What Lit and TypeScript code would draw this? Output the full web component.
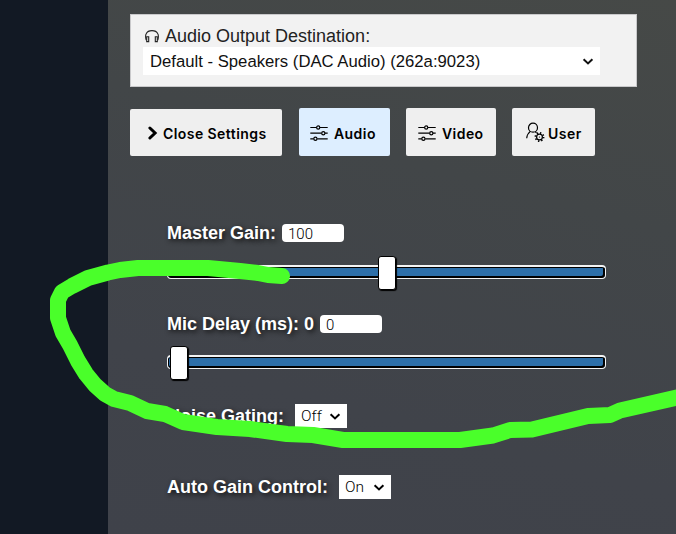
import { LitElement, html, css, svg } from "lit";
import { customElement } from "lit/decorators.js";
import { classMap } from "lit/directives/class-map.js";
import { styleMap } from "lit/directives/style-map.js";

const chevron = html`<svg class="caret" width="12" height="8" viewBox="0 0 12 8">
  <path d="M1.600 1.200 6 5.400l4.400-4.200" fill="none" stroke="currentColor" stroke-width="2" />
</svg>`;

const sliders = svg`<svg width="18" height="16" viewBox="0 0 18 16" fill="none" stroke="currentColor" stroke-width="1.2">
  <path d="M.3 2.500h6.200M10 2.500h7.700M.3 8.200h11.200M15 8.200h2.700M.3 13.800h3.400M7.200 13.800h10.500" />
  <circle cx="8.2" cy="2.5" r="1.6" /><circle cx="13.3" cy="8.2" r="1.6" /><circle cx="5.4" cy="13.8" r="1.6" />
</svg>`;

const arrow = svg`<svg width="11" height="14" viewBox="0 0 11 14">
  <path d="M2.900 2 8.100 7 2.900 12" fill="none" stroke="currentColor" stroke-width="3" stroke-linecap="round" />
</svg>`;

const userGear = svg`<svg width="19" height="21" viewBox="0 0 19 21" fill="none" stroke="currentColor" stroke-width="1.2">
  <circle cx="7" cy="5.700" r="4.500" />
  <path d="M4.300 9.400C2.300 11 1 13.200.7 16.200M9.100 9.700l1.500 1" />
  <circle cx="13.500" cy="15" r="2.900" />
  <circle cx="13.500" cy="15" r="4.100" stroke-width="1.700" stroke-dasharray="1.350 1.870" />
  <circle cx="13.500" cy="15" r=".6" fill="currentColor" stroke="none" />
</svg>`;

const headphones = svg`<svg width="14" height="14" viewBox="0 0 14 14" fill="none" stroke="currentColor" stroke-width="1.1">
  <path d="M1.200 10.200C.4 7.300.4 5.200 1.200 3.700 2.200 1.500 4.300.6 7 .6s4.800.9 5.800 3.100c.8 1.500.8 3.600 0 6.500" />
  <path d="M1.700 6.700h2v4.900h-2zM10.300 6.700h2v4.900h-2z" />
</svg>`;

@customElement("tab-button")
class TabButton extends LitElement {
  static properties = { label: {}, icon: { attribute: false }, kind: {} };
  declare label: string;
  declare icon: unknown;
  declare kind: string;

  static styles = css`
    :host { display: block; }
    .tab {
      display: flex; align-items: center; gap: 6px; box-sizing: border-box;
      width: 90px; height: 48px; padding: 3px 0 0 12px; border: 0; border-radius: 2px;
      background: #efefef; color: #000;
      font: 600 14px/20px Inter, "Liberation Sans", sans-serif; letter-spacing: 0.43px; white-space: nowrap;
    }
    .tab svg { flex: none; margin-top: -2px; }
    .active { width: 91px; padding-left: 11px; background: #ddeeff; }
    .primary { width: 152px; height: 47px; padding-left: 17px; gap: 5px; }
    .user { width: 83px; padding-left: 14px; gap: 3px; letter-spacing: 0.5px; }
  `;
  render() {
    return html`<button class=${classMap({
      tab: true,
      active: this.kind === "active",
      primary: this.kind === "primary",
      user: this.kind === "user",
    })}>${this.icon}<span>${this.label}</span></button>`;
  }
}

@customElement("range-slider")
class RangeSlider extends LitElement {
  static properties = { offset: { type: Number } };
  declare offset: number;
  static styles = css`
    :host { display: block; }
    .track {
      position: relative; box-sizing: border-box; width: 439px; height: 14px;
      border: solid #f4f4f4; border-width: 2px 1px 1px; border-radius: 4px; background: #2d6fa9;
      box-shadow: inset 0 0 0 1px #000, inset -1px -1px 0 1px #000;
    }
    .thumb {
      position: absolute; top: -11px; box-sizing: border-box; width: 18px; height: 34px;
      border: 1px solid #000; border-radius: 3px; background: #fff; box-shadow: 1px 1px 1px #000;
    }
  `;
  render() {
    return html`<div class="track"><div class="thumb" style=${styleMap({ left: `${this.offset}px` })}></div></div>`;
  }
}

@customElement("app-root")
class AppRoot extends LitElement {
  static styles = css`
    :host {
      display: flex; position: relative; width: 676px; height: 534px; overflow: hidden;
      background: #121924; font-family: "Liberation Sans", Arial, sans-serif;
    }
    .sidebar { flex: none; width: 108px; }
    .content {
      flex: 1; box-sizing: border-box; padding: 14px 39px 0 22px;
      background: linear-gradient(195deg, #464947 0%, #424648 34%, #40434a 72%, #3f424a 100%);
    }
    .output {
      box-sizing: border-box; width: 507px; height: 73px; padding: 11px 12px 0;
      border: 1px solid #c9c9cb; background: #f2f2f2; color: #222;
    }
    .heading { display: flex; align-items: center; gap: 6px; height: 21px; padding-left: 2px; font-size: 18px; white-space: nowrap; }
    .select { display: flex; align-items: center; justify-content: space-between; box-sizing: border-box; background: #fff; color: #111; white-space: nowrap; }
    .device { width: 457px; height: 28px; padding: 1px 6px 0 7px; font-size: 16.7px; }
    .tabs { display: flex; align-items: flex-end; margin-top: 21px; gap: 16px; }
    .first { margin-right: 1px; }
    .controls { padding: 67px 0 0 37px; }
    .row { display: flex; align-items: center; height: 20px; color: #fff; }
    .name { font-weight: 700; font-size: 18px; line-height: 20px; white-space: nowrap; text-shadow: 2px 2px 5px #111; }
    .number {
      box-sizing: border-box; width: 62px; height: 18px; padding: 0 6px; margin-left: 6px;
      border-radius: 4px; background: #fff; color: #000; font: 300 15px/20px Roboto, sans-serif;
    }
    .slider { padding: 22px 0 35px; }
    .delay { padding: 21px 0 37px; }
    .choice { width: 52px; height: 24px; padding: 1px 6px 0 6px; margin-left: 11px; font: 300 15.500px/23px Roboto, sans-serif; color: #000; }
    .last { margin-top: 51px; }
    .marker { position: absolute; inset: 0; }
  `;

  private marker = "M282 276L268 275 258 273 240 271 208 268H138L120 270 108 272.500 88 278 72 286 62 292 58 300V318L63 333 70 345 78 361 86 374 95 385 105 394 114 399 130 403 147 411 165 414 183 422 217 427 250 429 287 434 313 435 343 440H460L493 435.500 510 430 532 429.500 588 416 610 415 620 410.500 688 395";

  render() {
    return html`
      <div class="sidebar"></div>
      <main class="content">
        <section class="output">
          <div class="heading">${headphones}<span>Audio Output Destination:</span></div>
          <div class="select device"><span>Default - Speakers (DAC Audio) (262a:9023)</span>${chevron}</div>
        </section>
        <nav class="tabs">
          <tab-button class="first" label="Close Settings" .icon=${arrow} kind="primary"></tab-button>
          <tab-button label="Audio" .icon=${sliders} kind="active"></tab-button>
          <tab-button label="Video" .icon=${sliders}></tab-button>
          <tab-button label="User" .icon=${userGear} kind="user"></tab-button>
        </nav>
        <section class="controls">
          <div class="row"><span class="name">Master Gain:</span><span class="number">100</span></div>
          <div class="slider"><range-slider .offset=${210}></range-slider></div>
          <div class="row"><span class="name">Mic Delay (ms): 0</span><span class="number">0</span></div>
          <div class="slider delay"><range-slider .offset=${2}></range-slider></div>
          <div class="row"><span class="name">Noise Gating:</span><span class="select choice"><span>Off</span>${chevron}</span></div>
          <div class="row last"><span class="name">Auto Gain Control:</span><span class="select choice"><span>On</span>${chevron}</span></div>
        </section>
      </main>
      <svg class="marker" width="676" height="534" viewBox="0 0 676 534">
        <path d=${this.marker} fill="none" stroke="#4aff2a" stroke-width="16" stroke-linecap="round" stroke-linejoin="round" />
      </svg>`;
  }
}
